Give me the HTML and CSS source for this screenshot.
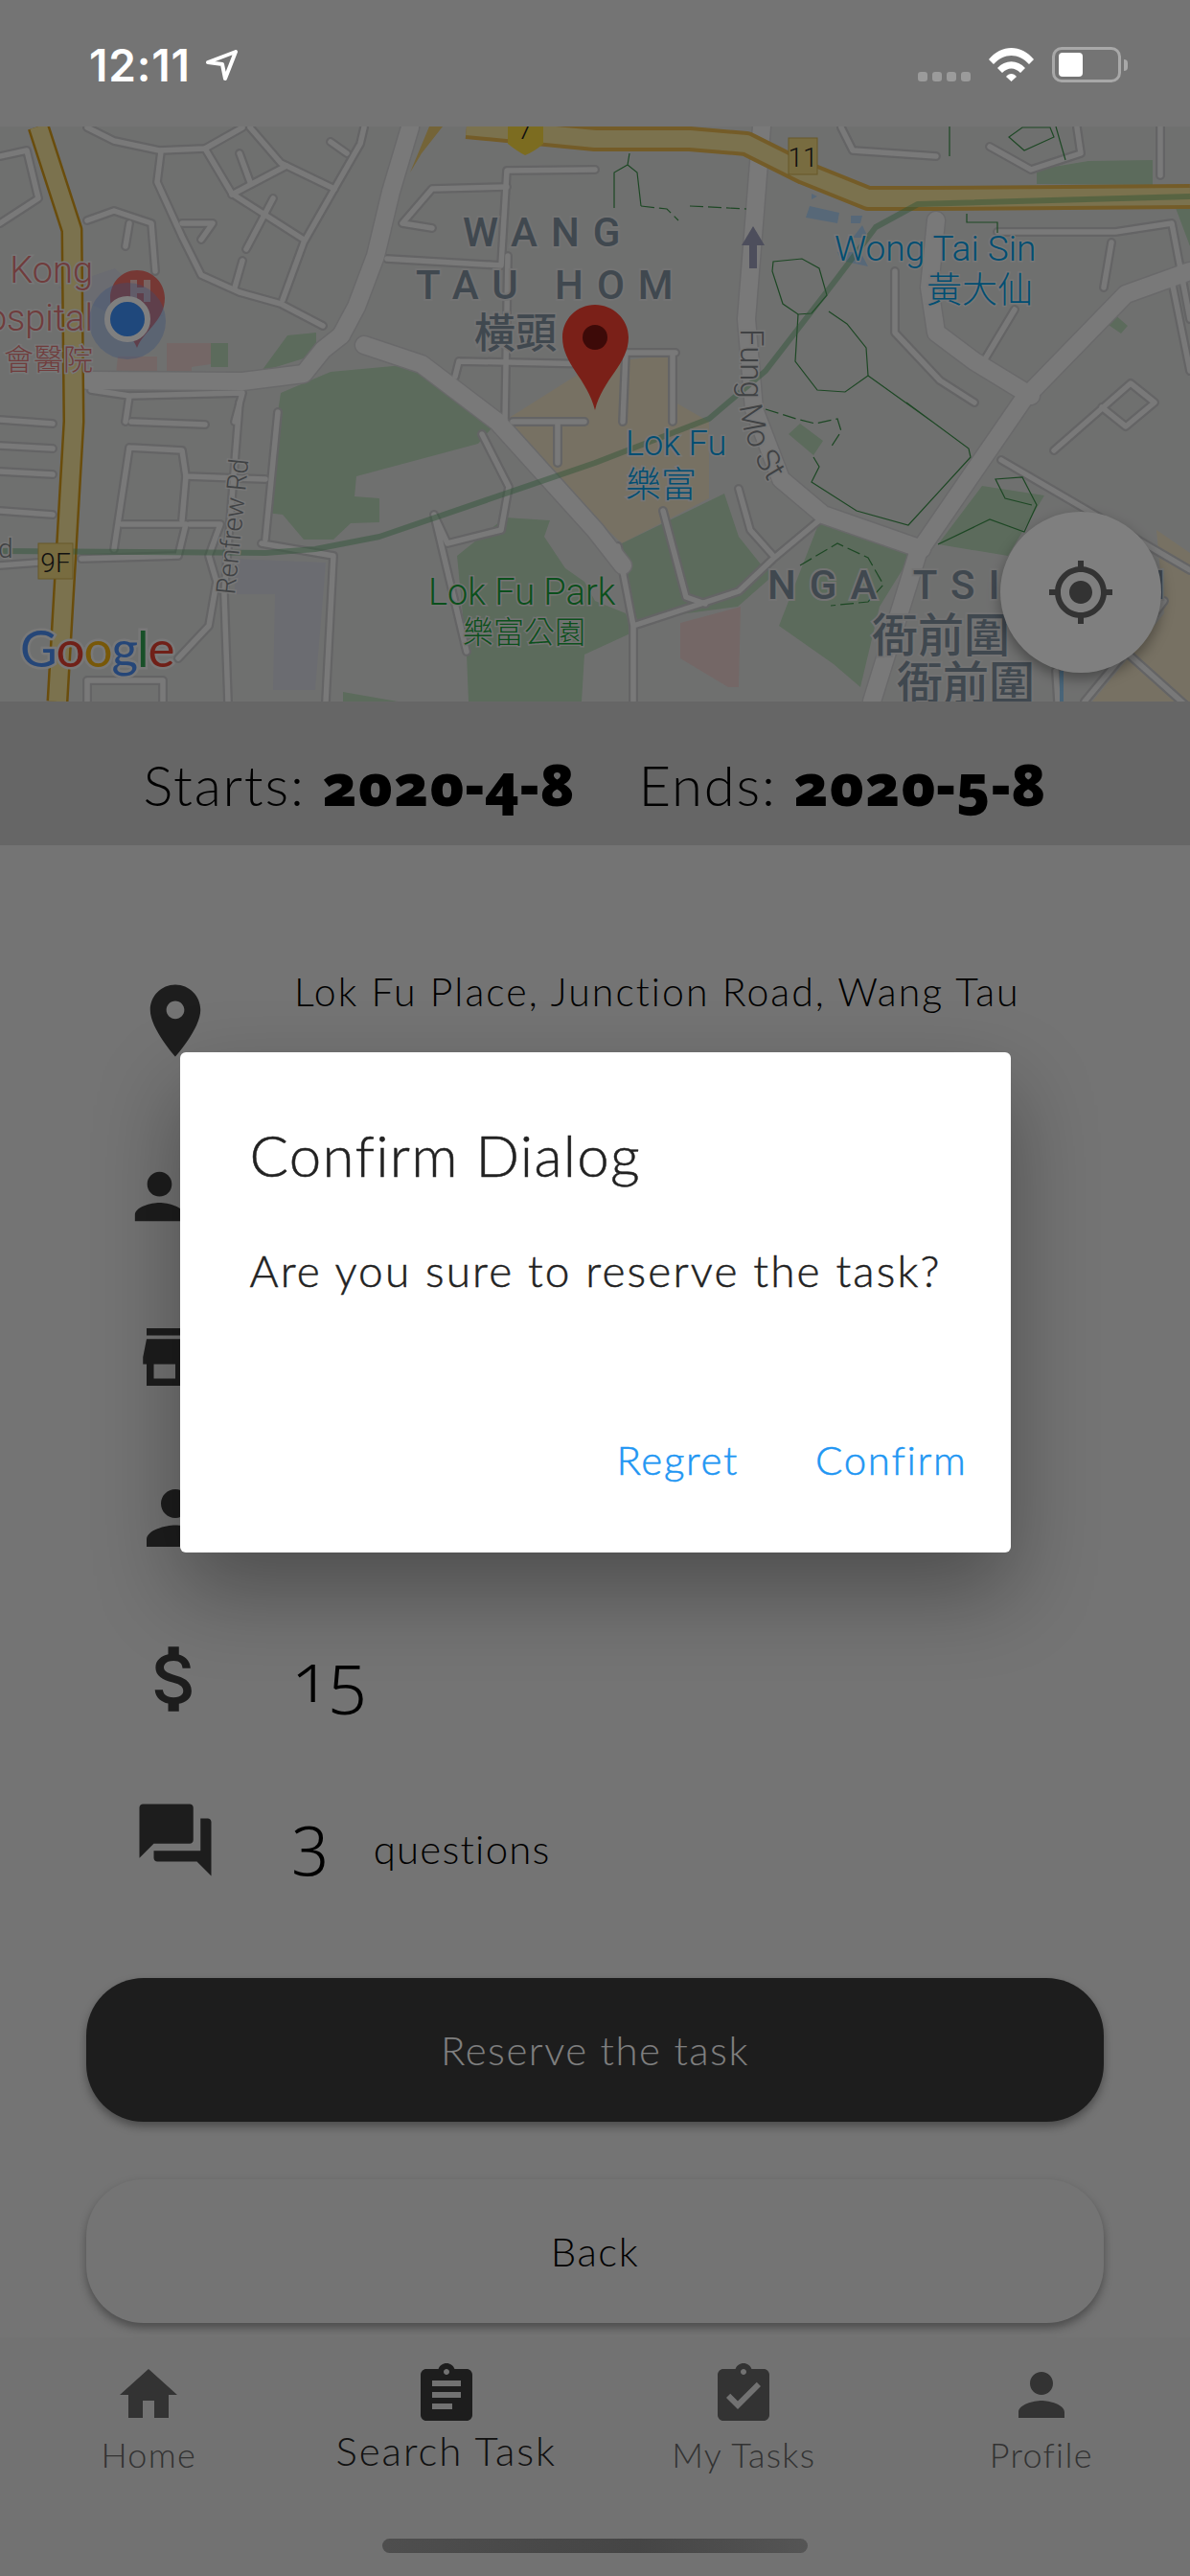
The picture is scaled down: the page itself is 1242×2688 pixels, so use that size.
FILE: index.html

```html
<!DOCTYPE html>
<html lang="en">
<head>
    <meta charset="UTF-8">
    <meta name="viewport" content="width=device-width, initial-scale=1.0">
    <title>Task detail</title>
    <link rel="stylesheet" href="styles.css">
</head>
<body>
    <div class="statusbar">
        <div class="status-left">
            <span class="clock">12:11</span>
            <svg class="arrow" viewBox="0 0 33 32"><path d="M2 13 L31 2 L20 30 L17 15 Z" fill="none" stroke="#fff" stroke-width="4" stroke-linejoin="round"/></svg>
        </div>
        <div class="status-right">
            <div class="signal"><i></i><i></i><i></i><i></i></div>
            <svg class="wifi" viewBox="0 0 47 36"><path d="M0 13 C13 -3 34 -3 47 13 L42 18 C31 6 16 6 5 18 Z M9 22 C17 13 30 13 38 22 L33 27 C27 21 20 21 14 27 Z M18 31 C21 27 26 27 29 31 L23.500 36 Z" fill="#fff"/></svg>
            <div class="battery"><div class="battery-fill"></div></div>
            <div class="battery-cap"></div>
        </div>
    </div>

    <div class="map">
        <svg class="map-canvas" viewBox="0 132 1242 600">
            <defs>
                <g id="minor">
                    <path d="M91 133 L119 147 L166 157 L214 155 L253 133"/>
                    <path d="M168 158 L164 190 L190 247 L210 287 L250 305 L293 317 L337 340"/>
                    <path d="M214 155 L242 202 L317 250"/>
                    <path d="M261 133 L293 170 L349 197"/>
                    <path d="M349 197 L317 253 L295 313"/>
                    <path d="M299 173 L242 203"/>
                    <path d="M261 190 L250 160"/>
                    <path d="M285 207 L257 260"/>
                    <path d="M253 272 L245 300"/>
                    <path d="M380 133 L376 150 L349 197"/>
                    <path d="M345 148 L362 160"/>
                    <path d="M190 233 L222 233 L210 250"/>
                    <path d="M404 270 L523 277 L529 178 L621 177"/>
                    <path d="M529 195 L451 197 L420 233 L451 238"/>
                    <path d="M479 377 L475 393 M479 377 L621 380"/>
                    <path d="M530 267 L527 440"/>
                    <path d="M0 163 L28 157 L40 207 L0 233"/>
                    <path d="M91 230 L119 220 L158 233 L162 283"/>
                    <path d="M131 257 L135 233"/>
                    <path d="M95 407 L135 413 L253 410 L245 440 M135 413 L131 440"/>
                    <path d="M0 438 L55 442 M0 465 L55 468 M0 492 L55 495 M0 533 L55 537 M0 590 L40 587"/>
                    <path d="M85 583 L186 580 L194 547 L127 547"/>
                    <path d="M135 467 L119 573 M135 467 L190 470 L194 497 L277 500"/>
                    <path d="M137 440 L214 443 M194 497 L190 543"/>
                    <path d="M198 547 L230 547 L218 580 L226 607 L218 653 L186 687"/>
                    <path d="M238 732 L234 620 L250 420"/>
                    <path d="M290 430 L277 563 M273 567 L348 580 L340 732"/>
                    <path d="M91 732 L91 710 L170 710 L170 732"/>
                    <path d="M453 537 L487 680 M453 537 L467 567 L523 553 L531 508 L503 453"/>
                    <path d="M535 440 L610 440 M582 440 L582 483"/>
                    <path d="M855 543 L807 583 L771 617 L661 653 M645 570 L661 653 L661 732"/>
                    <path d="M692 533 L716 623 L736 630 M771 510 L783 553 L807 580"/>
                    <path d="M1045 480 L1242 595 M1167 673 L1242 740 M1104 732 L1102 700"/>
                    <path d="M1215 627 L1175 680 L1132 732"/>
                    <path d="M878 133 L890 157 L977 163"/>
                    <path d="M1033 153 L1076 177 L1128 160 L1124 133"/>
                    <path d="M1211 133 L1211 183"/>
                    <path d="M1041 242 L1164 242 L1223 233 L1242 333 M1160 253 L1152 300"/>
                    <path d="M934 283 L934 347 L981 397 L1017 420 M1059 323 L1029 373"/>
                    <path d="M1223 293 L1242 387"/>
                    <path d="M1100 470 L1180 400 L1205 420 L1175 445 L1150 425"/>
                    <path d="M702 368 L702 440 M653 368 L705 368 M653 368 L650 440"/>
                </g>
                <g id="major">
                    <path d="M428 133 L408 200 L392 267 L372 320 L356 350"/>
                    <path d="M356 350 L337 365 L317 390 L253 398 L91 397"/>
                    <path d="M380 360 L440 380 L519 440 L621 553 L650 590"/>
                    <path d="M795 132 L787 233 L779 333 L787 427 L815 500 L859 537 L962 573"/>
                    <path d="M1242 283 L1175 307 L1068 417 L958 577 L910 732"/>
                    <path d="M977 230 L970 300 L977 347 L1017 377 L1076 413"/>
                </g>
            </defs>

            <rect class="land" x="0" y="132" width="1242" height="600"/>

            <polygon class="tan" points="525,440 620,380 700,370 705,420 740,440 740,520 649,567 621,540 595,515"/>
            <polygon class="tan" points="1207,553 1242,577 1242,732 1140,732 1183,680 1215,640"/>
            <polygon class="pink" points="174,358 220,358 220,380 200,383 200,390 174,390"/>
            <polygon class="pink" points="123,372 164,372 164,390 121,390"/>
            <polygon class="pink" points="710,650 773,633 771,717 760,717 710,687"/>
            <polygon class="slate" points="245,583 340,587 329,720 285,720 287,620 245,620"/>
            <polygon class="slate" points="60,300 120,330 170,330 120,280"/>

            <polygon class="park" points="293,410 345,388 432,380 519,440 499,463 372,497 370,518 396,520 396,545 366,546 348,563 317,563 295,537 277,535 285,463"/>
            <polygon class="park" points="273,387 300,350 330,347 330,370 275,387"/>
            <polygon class="park" points="220,358 238,358 238,383 220,383"/>
            <polygon class="park" points="477,580 527,540 574,543 568,560 590,593 610,607 621,627 653,640 660,660 610,683 487,683"/>
            <polygon class="park" points="487,683 610,683 607,732 489,732"/>
            <polygon class="park" points="649,567 756,515 771,560 795,590 811,597 770,633 665,647 653,607"/>
            <polygon class="park" points="813,653 855,545 952,578 918,633 898,717 870,693"/>
            <polygon class="park" points="979,568 1025,507 1090,517 1052,580"/>
            <polygon class="park" points="823,453 835,442 859,460 849,475"/>
            <polygon class="park" points="1082,192 1082,177 1136,168 1203,167 1203,193"/>
            <polygon class="park" points="1154,337 1162,327 1177,340 1170,348"/>
            <polygon class="park" points="1227,217 1242,213 1242,257"/>
            <polygon class="park" points="358,722 415,732 358,732"/>

            <polygon class="building" points="845,215 876,222 874,233 841,227"/>
            <polygon class="building" points="847,202 853,205 847,208"/>
            <polygon class="building" points="888,225 900,225 898,233 888,233"/>
            <polygon class="building" points="900,235 906,248 890,248"/>
            <polygon class="building" points="874,263 898,263 906,278 878,272"/>

            <g class="road-minor-case"><use href="#minor"/></g>
            <g class="road-major-case"><use href="#major"/></g>
            <g class="road-minor"><use href="#minor"/></g>
            <g class="road-major"><use href="#major"/></g>

            <path class="water" d="M1108 700 V732"/>

            <path class="trail" d="M806 283 L807 273 L837 270 L855 280 L863 308 L847 327 L833 328 L817 317 Z"/>
            <path class="trail" d="M833 328 L830 377 L853 407 L882 409 L906 392 L904 363 L884 338 L865 325"/>
            <path class="trail" d="M906 392 L973 440 M946 420 L1011 468 L1013 477 L948 548 L894 533 L847 503 L855 487 L849 477"/>
            <path class="trail" d="M641 217 V180 L655 172 L665 180 L669 215 M657 160 L655 172"/>
            <path class="trail trail-dash" d="M669 215 L696 218 L708 230 M720 215 L779 218"/>
            <path class="trail" d="M991 132 V163 M1102 132 L1112 167 M1053 143 L1069 157 L1100 143 L1096 133 L1067 133 Z"/>
            <path class="trail" d="M1009 223 V232 H1041 V243"/>
            <path class="trail" d="M979 568 L1033 542 L1069 555 L1082 527 L1067 498 L1039 500 L1049 520 L1077 527"/>
            <path class="trail trail-dash" d="M835 590 L874 567 L906 582 L922 610 L906 628 L867 632"/>
            <path class="trail trail-dash" d="M799 427 L831 437 L851 442 L874 437 L878 450 L867 467"/>

            <path class="highway-case" d="M40 132 L75 240 L77 440 L60 732"/>
            <path class="highway-fill" d="M40 132 L75 240 L77 440 L60 732"/>
            <path class="slip" d="M428 180 L448 132 L462 132 L440 160 Z"/>
            <path class="highway-case highway-gold" d="M487 132 L621 145 L720 145 L779 150 L839 180 L906 207 L970 207 L1242 205"/>
            <path class="highway-fill" d="M487 132 L621 145 L720 145 L779 150 L839 180 L906 207 L970 207 L1242 205"/>

            <path class="transit" d="M0 575 L277 577 L329 573 L396 560 L621 483 L740 437 L799 387 L874 290 L914 237 L958 213 L1242 205"/>

            <path class="shield-dark" d="M530 132 V150 Q540 158 548 162 Q558 158 567 150 V132 Z"/>
            <text class="shield-text" x="548" y="145">7</text>
            <rect class="shield" x="823" y="144" width="30" height="38"/>
            <text class="shield-text" x="838" y="174">11</text>
            <rect class="shield" x="40" y="567" width="36" height="37"/>
            <text class="shield-text" x="58" y="597">9F</text>

            <text class="area" x="483" y="257">WANG</text>
            <text class="area" x="434" y="312">TAU HOM</text>
            <text class="area-cjk" x="495" y="363">橫頭</text>
            <text class="area" x="801" y="625">NGA TSI</text>
            <text class="area area-end" x="1216" y="625">N</text>
            <text class="area-cjk area-cjk-big" x="910" y="680">衙前圍</text>
            <text class="area-cjk area-cjk-big" x="936" y="730">衙前圍</text>

            <text class="hospital" x="97" y="295">Kong</text>
            <text class="hospital" x="97" y="345">ospital</text>
            <text class="hospital hospital-cjk" x="97" y="386">會醫院</text>

            <text class="district" x="871" y="272">Wong Tai Sin</text>
            <text class="district district-cjk" x="967" y="316">黃大仙</text>
            <text class="district district-small" x="653" y="475">Lok Fu</text>
            <text class="district district-cjk" x="653" y="519">樂富</text>

            <text class="parkname" x="447" y="631">Lok Fu Park</text>
            <text class="parkname parkname-cjk" x="483" y="671">樂富公園</text>

            <path id="fung" d="M773 343 L773 430 Q778 470 812 518" fill="none"/>
            <path id="renfrew" d="M245 621 L262 455" fill="none"/>
            <text class="street street-big"><textPath href="#fung">Fung Mo St</textPath></text>
            <text class="street"><textPath href="#renfrew">Renfrew Rd</textPath></text>
            <text class="street" x="-2" y="582">d</text>
            <path class="oneway" d="M786 236 L774 256 H782 V280 H790 V256 H798 Z"/>

            <text class="google" x="21" y="696"><tspan class="g-blue">G</tspan><tspan class="g-red">o</tspan><tspan class="g-yellow">o</tspan><tspan class="g-blue">g</tspan><tspan class="g-green">l</tspan><tspan class="g-red">e</tspan></text>

            <path class="hospital-pin" d="M143 282 C127 282 115 295 115 311 C115 335 136 345 143 363 C150 345 172 335 172 311 C172 295 159 282 143 282 Z"/>
            <path class="hospital-h" d="M136 292 H143 V300 H150 V292 H157 V315 H150 V306 H143 V315 H136 Z"/>
            <circle class="you-halo" cx="133" cy="335" r="40"/>
            <circle class="you-dot" cx="133" cy="333" r="21"/>

            <path class="pin" d="M621 318 C602 318 587 333 587 352 C587 380 613 395 621 428 C629 395 656 380 656 352 C656 333 640 318 621 318 Z"/>
            <circle class="pin-dot" cx="621" cy="352" r="13"/>
        </svg>
        <div class="locate">
            <svg viewBox="0 0 24 24"><path d="M12 8c-2.210 0-4 1.790-4 4s1.790 4 4 4 4-1.790 4-4-1.790-4-4-4zm8.940 3c-.46-4.170-3.770-7.480-7.940-7.940V1h-2v2.060C6.830 3.520 3.520 6.830 3.060 11H1v2h2.060c.46 4.170 3.770 7.480 7.940 7.940V23h2v-2.060c4.170-.46 7.480-3.770 7.940-7.940H23v-2h-2.060zM12 19c-3.870 0-7-3.130-7-7s3.130-7 7-7 7 3.130 7 7-3.130 7-7 7z"/></svg>
        </div>
    </div>

    <div class="dates">
        <span class="date">Starts: <b>2020-4-8</b></span>
        <span class="date">Ends: <b>2020-5-8</b></span>
    </div>

    <div class="details">
        <div class="row row-address">
            <svg class="row-icon" viewBox="0 0 24 24"><path d="M12 2C8.130 2 5 5.130 5 9c0 5.250 7 13 7 13s7-7.750 7-13c0-3.870-3.130-7-7-7zm0 9.500c-1.380 0-2.500-1.120-2.500-2.500s1.120-2.500 2.500-2.500 2.500 1.120 2.500 2.500-1.120 2.500-2.500 2.500z"/></svg>
            <span class="address">Lok Fu Place, Junction Road, Wang Tau</span>
        </div>
        <div class="row">
            <svg class="row-icon row-icon-small" viewBox="0 0 24 24"><path d="M12 12c2.210 0 4-1.790 4-4s-1.790-4-4-4-4 1.790-4 4 1.790 4 4 4zm0 2c-2.670 0-8 1.340-8 4v2h16v-2c0-2.660-5.330-4-8-4z"/></svg>
        </div>
        <div class="row">
            <svg class="row-icon" viewBox="0 0 24 24"><path d="M20 4H4v2h16V4zm1 10v-2l-1-5H4l-1 5v2h1v6h10v-6h4v6h2v-6h1zm-9 4H6v-4h6v4z"/></svg>
        </div>
        <div class="row">
            <svg class="row-icon" viewBox="0 0 24 24"><path d="M12 12c2.210 0 4-1.790 4-4s-1.790-4-4-4-4 1.790-4 4 1.790 4 4 4zm0 2c-2.670 0-8 1.340-8 4v2h16v-2c0-2.660-5.330-4-8-4z"/></svg>
        </div>
        <div class="row">
            <svg class="row-icon" viewBox="0 0 24 24"><path d="M11.800 10.900c-2.270-.59-3-1.200-3-2.150 0-1.090 1.010-1.850 2.700-1.850 1.780 0 2.440.85 2.500 2.100h2.210c-.07-1.720-1.120-3.300-3.210-3.810V3h-3v2.160c-1.940.42-3.500 1.680-3.500 3.610 0 2.310 1.910 3.460 4.700 4.130 2.500.6 3 1.480 3 2.410 0 .69-.49 1.790-2.700 1.790-2.060 0-2.870-.92-2.980-2.100h-2.200c.12 2.190 1.760 3.420 3.680 3.830V21h3v-2.150c1.950-.37 3.500-1.500 3.500-3.550 0-2.840-2.430-3.810-4.700-4.400z"/></svg>
            <span class="amount">15</span>
        </div>
        <div class="row">
            <svg class="row-icon" viewBox="0 0 24 24"><path d="M21 6h-2v9H6v2c0 .55.45 1 1 1h11l4 4V7c0-.55-.45-1-1-1zm-4 6V3c0-.55-.45-1-1-1H3c-.55 0-1 .45-1 1v14l4-4h10c.55 0 1-.45 1-1z"/></svg>
            <span class="amount">3</span>
            <span class="amount-label">questions</span>
        </div>
    </div>

    <div class="actions">
        <button class="btn btn-dark">Reserve the task</button>
        <button class="btn btn-light">Back</button>
    </div>

    <nav class="tabbar">
        <a class="tab">
            <svg viewBox="0 0 24 24"><path d="M10 20v-6h4v6h5v-8h3L12 3 2 12h3v8z"/></svg>
            <span>Home</span>
        </a>
        <a class="tab tab-active">
            <svg viewBox="0 0 24 24"><path d="M19 3h-4.180C14.400 1.840 13.300 1 12 1c-1.300 0-2.400.84-2.820 2H5c-1.100 0-2 .9-2 2v14c0 1.100.9 2 2 2h14c1.100 0 2-.9 2-2V5c0-1.100-.9-2-2-2zm-7 0c.55 0 1 .45 1 1s-.45 1-1 1-1-.45-1-1 .45-1 1-1zm2 14H7v-2h7v2zm3-4H7v-2h10v2zm0-4H7V7h10v2z"/></svg>
            <span>Search Task</span>
        </a>
        <a class="tab">
            <svg viewBox="0 0 24 24"><path d="M19 3h-4.180C14.400 1.840 13.300 1 12 1c-1.300 0-2.400.84-2.820 2H5c-1.100 0-2 .9-2 2v14c0 1.100.9 2 2 2h14c1.100 0 2-.9 2-2V5c0-1.100-.9-2-2-2zm-7 0c.55 0 1 .45 1 1s-.45 1-1 1-1-.45-1-1 .45-1 1-1zm-2 14l-4-4 1.410-1.410L10 14.170l6.590-6.590L18 9l-8 8z"/></svg>
            <span>My Tasks</span>
        </a>
        <a class="tab">
            <svg viewBox="0 0 24 24"><path d="M12 12c2.210 0 4-1.790 4-4s-1.790-4-4-4-4 1.790-4 4 1.790 4 4 4zm0 2c-2.670 0-8 1.340-8 4v2h16v-2c0-2.660-5.330-4-8-4z"/></svg>
            <span>Profile</span>
        </a>
    </nav>

    <div class="scrim">
        <div class="dialog">
            <h2 class="dialog-title">Confirm Dialog</h2>
            <p class="dialog-text">Are you sure to reserve the task?</p>
            <div class="dialog-actions">
                <a class="dialog-link">Regret</a>
                <a class="dialog-link">Confirm</a>
            </div>
        </div>
    </div>

    <div class="home-bar"></div>
</body>
</html>
```

FILE: styles.css

```css
* {
    box-sizing: border-box;
}

html, body {
    margin: 0;
    padding: 0;
}

body {
    width: 1242px;
    height: 2688px;
    position: relative;
    overflow: hidden;
    display: flex;
    flex-direction: column;
    background-color: #e8e8e8;
    font-family: "Lato", "Open Sans", sans-serif;
    font-weight: 300;
    color: #000;
}

/* status bar sits above the scrim */
.statusbar {
    height: 132px;
    flex: none;
    position: relative;
    z-index: 3;
    display: flex;
    justify-content: space-between;
    padding: 49px 65px 0 93px;
}

.status-left {
    display: flex;
    align-items: flex-start;
    gap: 16px;
}

.clock {
    font-family: "Inter", sans-serif;
    font-size: 46px;
    font-weight: 600;
    line-height: 38px;
    color: #fff;
    letter-spacing: 0.8px;
}

.arrow {
    width: 33px;
    height: 32px;
    margin-top: 3px;
}

.status-right {
    display: flex;
    align-items: flex-start;
}

.signal {
    display: flex;
    gap: 5px;
    margin-top: 26px;
    margin-right: 19px;
}

.signal i {
    width: 10px;
    height: 10px;
    border-radius: 3px;
    background-color: #9b9b9b;
}

.wifi {
    width: 47px;
    height: 36px;
    margin-right: 19px;
}

.battery {
    width: 72px;
    height: 37px;
    border: 3px solid #a8a8a8;
    border-radius: 10px;
    padding: 3px 4px;
}

.battery-fill {
    width: 25px;
    height: 25px;
    border-radius: 4px;
    background-color: #fff;
}

.battery-cap {
    width: 4px;
    height: 12px;
    margin: 13px 0 0 3px;
    border-radius: 0 4px 4px 0;
    background-color: #a8a8a8;
}

/* map */
.map {
    height: 600px;
    flex: none;
    position: relative;
    overflow: hidden;
}

.map-canvas {
    display: block;
    width: 1242px;
    height: 600px;
}

.land { fill: #dfe0df; }
.tan { fill: #eee2c6; }
.pink { fill: #e8cfcc; }
.slate { fill: #d6d8e2; }
.park { fill: #b8d6b8; }
.building { fill: #aed0f0; }

.road-minor-case, .road-minor, .road-major-case, .road-major {
    fill: none;
    stroke-linecap: round;
    stroke-linejoin: round;
}

.road-minor-case { stroke: #c8c8ca; stroke-width: 10; }
.road-minor { stroke: #f2f2f2; stroke-width: 5.5; }
.road-major-case { stroke: #d2d2d4; stroke-width: 21; }
.road-major { stroke: #f2f2f2; stroke-width: 18; }

.water {
    stroke: #90c8f0;
    stroke-width: 4;
    fill: none;
}

.trail {
    fill: none;
    stroke: #3a8f48;
    stroke-width: 1.2;
}

.trail-dash {
    stroke-dasharray: 14 5;
}

.highway-case {
    fill: none;
    stroke: #d49a18;
    stroke-width: 23;
    stroke-linejoin: round;
}

.highway-gold {
    stroke: #e8b850;
    stroke-width: 26;
}

.highway-fill {
    fill: none;
    stroke: #f6e49c;
    stroke-width: 18;
    stroke-linejoin: round;
}

.slip {
    fill: #e8c870;
}

.transit {
    fill: none;
    stroke: #5aa86a;
    stroke-width: 6;
    opacity: 0.45;
    stroke-linejoin: round;
}

.shield { fill: #f0d880; stroke: #d0b050; stroke-width: 1; }
.shield-dark { fill: #f8d840; }

.shield-text {
    font-family: "Roboto", sans-serif;
    font-size: 28px;
    fill: #222;
    text-anchor: middle;
}

.area, .area-cjk {
    font-family: "Roboto", "Noto Sans CJK TC", sans-serif;
    fill: #80909f;
    paint-order: stroke;
    stroke: #e6e6e6;
    stroke-width: 4px;
}

.area {
    font-size: 42px;
    font-weight: 500;
    letter-spacing: 14px;
}

.area-end {
    text-anchor: end;
    letter-spacing: 0;
}

.area-cjk {
    font-size: 43px;
    font-weight: 500;
}

.area-cjk-big {
    font-size: 48px;
}

.hospital {
    font-family: "Roboto", "Noto Sans CJK TC", sans-serif;
    font-size: 38px;
    fill: #e07878;
    text-anchor: end;
    paint-order: stroke;
    stroke: #eee;
    stroke-width: 3px;
}

.hospital-cjk {
    font-size: 31px;
}

.district {
    font-family: "Roboto", "Noto Sans CJK TC", sans-serif;
    font-size: 37px;
    fill: #009ce4;
    paint-order: stroke;
    stroke: #eee;
    stroke-width: 3px;
}

.district-small {
    font-size: 36px;
}

.district-cjk {
    font-size: 37px;
}

.parkname {
    font-family: "Roboto", "Noto Sans CJK TC", sans-serif;
    font-size: 38px;
    fill: #16a038;
    paint-order: stroke;
    stroke: #e6e6e6;
    stroke-width: 3px;
}

.parkname-cjk {
    font-size: 32px;
}

.street {
    font-family: "Roboto", sans-serif;
    font-size: 28px;
    fill: #808488;
    paint-order: stroke;
    stroke: #eee;
    stroke-width: 3px;
}

.street-big {
    font-size: 33px;
}

.oneway {
    fill: #9a9cb8;
}

.google {
    font-family: "Lato", sans-serif;
    font-size: 53px;
    font-weight: 400;
    paint-order: stroke;
    stroke: #f0f0f0;
    stroke-width: 5px;
    letter-spacing: -1px;
}

.g-blue { fill: #4a8cf0; }
.g-red { fill: #e04030; }
.g-yellow { fill: #f0b010; }
.g-green { fill: #30a050; }

.you-halo { fill: #6a9cf0; opacity: 0.35; }
.hospital-pin { fill: #ec7068; }
.hospital-h { fill: #f2c8c4; }
.you-dot { fill: #3e90f8; stroke: #fff; stroke-width: 6; }
.pin { fill: #f44030; }
.pin-dot { fill: #7a1410; }

.locate {
    position: absolute;
    left: 1044px;
    top: 402px;
    width: 168px;
    height: 168px;
    border-radius: 50%;
    background-color: #fff;
    box-shadow: 0 6px 14px rgba(0, 0, 0, 0.35);
    display: flex;
    align-items: center;
    justify-content: center;
}

.locate svg {
    width: 72px;
    height: 72px;
    fill: #666;
}

/* date band */
.dates {
    height: 150px;
    flex: none;
    background-color: #cdcdcd;
    display: flex;
    justify-content: center;
    align-items: center;
    gap: 66px;
    padding-top: 22px;
}

.date {
    font-size: 58px;
    font-weight: 300;
    line-height: 1;
    white-space: nowrap;
    letter-spacing: 1.800px;
}

.date b {
    font-family: "Noto Sans", "Lato", sans-serif;
    font-weight: 900;
    font-size: 60px;
    letter-spacing: 1px;
    font-variant-numeric: oldstyle-nums;
}

/* detail rows */
.details {
    flex: none;
    height: 1182px;
    padding: 120px 0 0 138px;
    display: flex;
    flex-direction: column;
}

.row {
    height: 168px;
    flex: none;
    display: flex;
    align-items: center;
}

.row-address {
    height: 162px;
    align-items: flex-start;
}

.row-icon {
    width: 90px;
    height: 90px;
    flex: none;
    fill: #3a3a3a;
}

.row-address .row-icon {
    margin-top: 18px;
}

.row-icon-small {
    width: 77px;
    height: 77px;
    margin-left: -10px;
}

.address {
    margin: 9px 0 0 79px;
    font-size: 41px;
    line-height: 48px;
    white-space: nowrap;
    letter-spacing: 2.050px;
}

.amount {
    margin: -8px 0 0 77px;
    font-family: "Noto Sans", "Lato", sans-serif;
    font-weight: 300;
    font-size: 72px;
    line-height: 90px;
    font-variant-numeric: oldstyle-nums;
}

.amount-label {
    margin: 17px 0 0 46px;
    font-size: 42px;
    letter-spacing: 1.200px;
}

/* buttons */
.actions {
    flex: none;
    display: flex;
    flex-direction: column;
    gap: 60px;
    padding: 0 90px;
}

.btn {
    display: block;
    height: 150px;
    width: 100%;
    border: none;
    border-radius: 60px;
    font-family: inherit;
    font-size: 42px;
    font-weight: 300;
    letter-spacing: 1.500px;
    box-shadow: 0 5px 10px rgba(0, 0, 0, 0.35);
}

.btn-dark {
    background-color: #3a3a3a;
    color: #fff;
}

.btn-light {
    background-color: #e8e8e8;
    color: #000;
}

/* tabs */
.tabbar {
    position: absolute;
    left: 0;
    right: 0;
    bottom: 0;
    height: 249px;
    display: flex;
    padding-top: 24px;
    background-color: #e4e4e4;
}

.tab {
    flex: 1;
    display: flex;
    flex-direction: column;
    align-items: center;
    color: #666;
    font-size: 36px;
    letter-spacing: 1.300px;
}

.tab svg {
    width: 72px;
    height: 72px;
    fill: #666;
}

.tab span {
    height: 60px;
    line-height: 60px;
    margin-top: -4px;
    white-space: nowrap;
}

.tab-active {
    color: #222;
    font-size: 42px;
    letter-spacing: 2px;
}

.tab-active svg {
    fill: #3a3a3a;
}

.tab-active span {
    margin-top: -8px;
}

/* dialog */
.scrim {
    position: absolute;
    left: 0;
    top: 0;
    width: 1242px;
    height: 2688px;
    z-index: 2;
    background-color: rgba(0, 0, 0, 0.5);
    display: flex;
    justify-content: center;
    align-items: center;
    padding-top: 30px;
}

.dialog {
    width: 867px;
    height: 522px;
    background-color: #fff;
    border-radius: 6px;
    box-shadow: 0 40px 90px rgba(0, 0, 0, 0.33);
    padding: 0 45px 0 73px;
    display: flex;
    flex-direction: column;
    color: #222;
}

.dialog-title {
    margin: 72px 0 0;
    font-size: 60px;
    font-weight: 300;
    line-height: 70px;
    letter-spacing: 1.300px;
    -webkit-text-stroke: 0.5px #222;
}

.dialog-text {
    margin: 58px 0 0;
    font-size: 46px;
    font-weight: 300;
    line-height: 56px;
    letter-spacing: 2.150px;
    white-space: nowrap;
    -webkit-text-stroke: 0.5px #222;
}

.dialog-actions {
    margin-top: auto;
    margin-bottom: 72px;
    display: flex;
    justify-content: flex-end;
    gap: 80px;
}

.dialog-link {
    font-size: 42px;
    font-weight: 300;
    line-height: 50px;
    letter-spacing: 1.700px;
    color: #2196f3;
    -webkit-text-stroke: 0.5px #2196f3;
}

.home-bar {
    position: absolute;
    left: 399px;
    top: 2649px;
    width: 444px;
    height: 15px;
    z-index: 3;
    border-radius: 8px;
    background: linear-gradient(90deg, #4e4e4e, #454545 60%, #555);
}
```
